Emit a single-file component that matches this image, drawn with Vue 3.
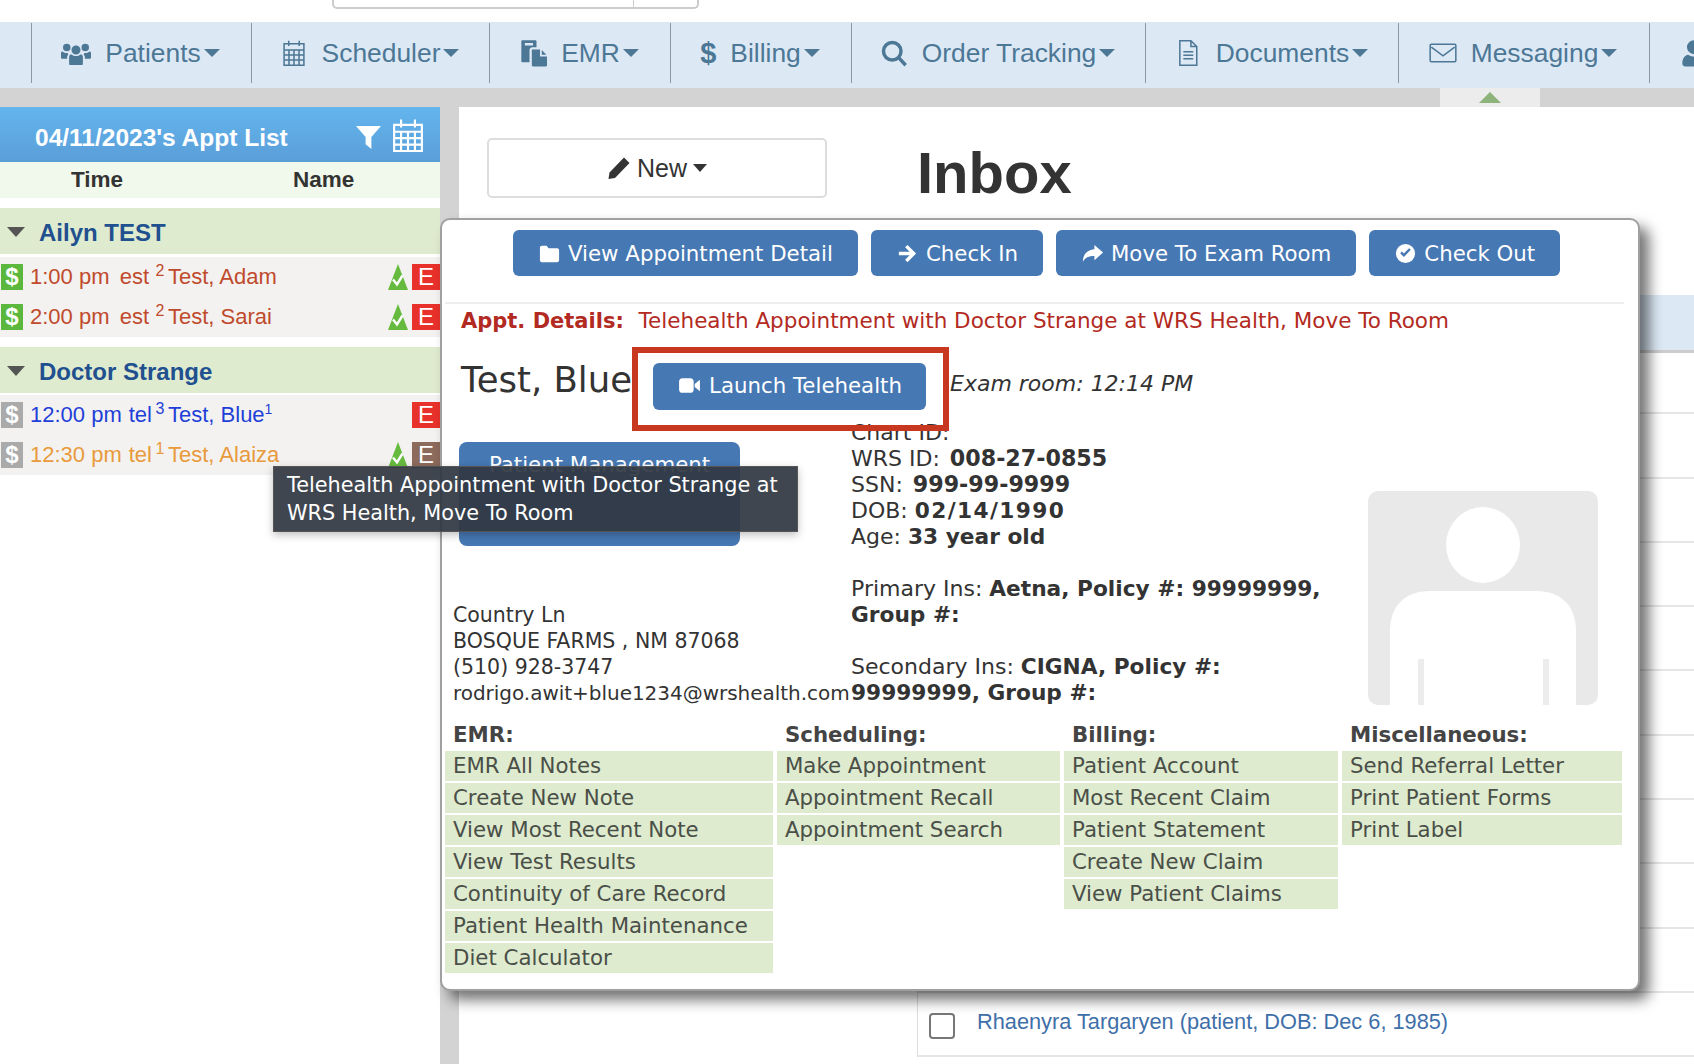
<script setup>
const navItems = [
  { label: 'Patients', icon: 'users' },
  { label: 'Scheduler', icon: 'calendar' },
  { label: 'EMR', icon: 'paste' },
  { label: 'Billing', icon: 'dollar' },
  { label: 'Order Tracking', icon: 'search' },
  { label: 'Documents', icon: 'file' },
  { label: 'Messaging', icon: 'envelope' },
];

const icons = {
  users: { fill: true, vb: '0 2.500 24 20', d: 'M12 6.500a3.600 3.600 0 1 1 0 7.200 3.600 3.600 0 0 1 0-7.200zM4.600 5a3 3 0 1 1 0 6 3 3 0 0 1 0-6zM19.400 5a3 3 0 1 1 0 6 3 3 0 0 1 0-6zM6.500 15.500c0-1.300 1-1.800 2-1.800 1 .8 2.200 1.200 3.500 1.200s2.500-.4 3.500-1.200c1 0 2 .5 2 1.800V21c0 .6-.5 1-1 1H7.500c-.5 0-1-.4-1-1zM0 12.500c0-.8.600-1.200 1.300-1.200.9.800 2 1.200 3.200 1.200.3 0 .6 0 .9-.1-.1.700.2 1.200.5 1.400-.6.400-1 1-1 1.900v1.300H1c-.6 0-1-.4-1-1zM24 12.500c0-.8-.6-1.200-1.300-1.200-.9.800-2 1.200-3.200 1.200-.3 0-.6 0-.9-.1.100.7-.2 1.200-.5 1.400.6.400 1 1 1 1.900v1.300H23c.6 0 1-.4 1-1z' },
  calendar: { d: 'M3.500 4h17v18.500h-17zM3.500 9.500h17M3.500 13.800h17M3.500 18h17M7.700 9.500v13M12 9.500v13M16.300 9.500v13M7.500 1.500v4.500M16.500 1.500v4.500' },
  paste: { fill: true, d: 'M3 1h11c.6 0 1 .4 1 1v5h-3.500c-1.400 0-2.500 1.100-2.500 2.500V20H3c-.6 0-1-.4-1-1V2c0-.6.4-1 1-1zM5 3.500v2h7v-2zM11 9h7v6h6v7.500c0 .6-.4 1-1 1H12c-.6 0-1-.4-1-1zM19.500 9.500l4 4h-4z' },
  search: { heavy: true, d: 'M10.500 3a7.500 7.500 0 1 1 0 15 7.500 7.500 0 0 1 0-15zM16 16l6 6.500' },
  file: { d: 'M5 1.500h9.500l5 5V22.500H5zM14.500 1.500v5h5M8 11h8.500M8 14h8.500M8 17h8.500' },
  envelope: { d: 'M2 4.500h20c.5 0 1 .4 1 1v13c0 .6-.5 1-1 1H2c-.5 0-1-.4-1-1v-13c0-.6.5-1 1-1zM2 7l10 7.500L22 7' },
};

const providers = [
  {
    name: 'Ailyn TEST',
    appts: [
      { time: '1:00 pm', type: 'est', sup: '2', name: 'Test, Adam', tone: 'red', paid: true, tree: true },
      { time: '2:00 pm', type: 'est', sup: '2', name: 'Test, Sarai', tone: 'red', paid: true, tree: true },
    ],
  },
  {
    name: 'Doctor Strange',
    appts: [
      { time: '12:00 pm', type: 'tel', sup: '3', name: 'Test, Blue', nameSup: '1', tone: 'blue' },
      { time: '12:30 pm', type: 'tel', sup: '1', name: 'Test, Alaiza', tone: 'orange', tree: true, brown: true },
    ],
  },
];

const menus = [
  { title: 'EMR:', items: ['EMR All Notes', 'Create New Note', 'View Most Recent Note', 'View Test Results', 'Continuity of Care Record', 'Patient Health Maintenance', 'Diet Calculator'] },
  { title: 'Scheduling:', items: ['Make Appointment', 'Appointment Recall', 'Appointment Search'] },
  { title: 'Billing:', items: ['Patient Account', 'Most Recent Claim', 'Patient Statement', 'Create New Claim', 'View Patient Claims'] },
  { title: 'Miscellaneous:', items: ['Send Referral Letter', 'Print Patient Forms', 'Print Label'] },
];

const emptyRows = 10;
</script>

<template>
  <div class="page">
    <div class="topbar">
      <div class="search-stub"><span class="search-addon"></span></div>
    </div>

    <nav class="nav">
      <span></span>
      <a v-for="item in navItems" :key="item.label" class="nav-item">
        <span v-if="item.icon === 'dollar'" class="nav-dollar">$</span>
        <svg
          v-else
          :viewBox="icons[item.icon].vb || '0 0 24 24'"
          class="nav-icon"
          :class="[item.icon, { filled: icons[item.icon].fill, heavy: icons[item.icon].heavy }]"
        >
          <path :d="icons[item.icon].d" />
        </svg>
        <span class="nav-label">{{ item.label }}</span>
        <i class="caret"></i>
      </a>
      <a class="nav-item nav-user">
        <svg viewBox="0 0 24 24" class="nav-icon filled"><path d="M12 1a6 6 0 1 1 0 12 6 6 0 0 1 0-12zM2 21c0-4 2-7 5-7.500 1.400 1 3 1.500 5 1.500s3.600-.5 5-1.500c3 .5 5 3.500 5 7.500 0 1.500-1 2.500-2.500 2.500h-15C3 23.500 2 22.500 2 21z" /></svg>
      </a>
    </nav>

    <div class="strip">
      <div class="strip-tab"><i class="strip-arrow"></i></div>
    </div>

    <div class="body">
      <aside class="sidebar">
        <div class="side-head">
          <span class="side-title">04/11/2023's Appt List</span>
          <svg viewBox="0 0 26 26" class="side-filter"><path d="M0 1h26L16 12.500V25l-6-5v-7.500z" /></svg>
          <svg viewBox="0 0 30 32" class="side-cal"><path d="M2 6h26v24.500H2zM2 12.500h26M2 18.500h26M2 24.500h26M8.500 12.500v18M15 12.500v18M21.500 12.500v18M8.500 1v7.500M21.500 1v7.500" /></svg>
        </div>
        <div class="side-cols"><span class="col-time">Time</span><span class="col-name">Name</span></div>

        <section v-for="p in providers" :key="p.name" class="provider">
          <h3 class="provider-name"><i class="provider-caret"></i><span class="provider-label">{{ p.name }}</span></h3>
          <div class="appts">
            <div v-for="a in p.appts" :key="a.time" class="appt" :class="a.tone">
              <span class="pay" :class="{ paid: a.paid }">$</span>
              <span class="appt-time">{{ a.time }}</span>
              <span class="appt-type">{{ a.type }}</span>
              <sup class="appt-sup">{{ a.sup }}</sup>
              <span class="appt-name">{{ a.name }}<sup v-if="a.nameSup" class="name-sup">{{ a.nameSup }}</sup></span>
              <svg v-if="a.tree" viewBox="0 0 20 26" class="tree">
                <path d="M10 0l10 26H0z" fill="#66bb3f" />
                <path d="M5 15.500l4 5 5.500-9" fill="none" stroke="#fff" stroke-width="2.400" />
              </svg>
              <span class="ebadge" :class="{ brown: a.brown }">E</span>
            </div>
          </div>
        </section>
      </aside>

      <main class="main">
        <div class="main-head">
          <button class="new-btn">
            <svg viewBox="0 0 24 24" class="new-icon"><path d="M17 1.500l5.500 5.500L8 22 1.500 23l1-6.500z" /></svg>
            New <i class="caret dark"></i>
          </button>
          <h1 class="inbox">Inbox</h1>
        </div>
        <div class="msg-table">
          <div class="msg-head"></div>
          <div v-for="n in emptyRows" :key="n" class="msg-row"></div>
          <div class="msg-row">
            <span class="msg-check"></span>
            <a class="msg-link">Rhaenyra Targaryen (patient, DOB: Dec 6, 1985)</a>
          </div>
        </div>
      </main>
    </div>

    <div class="popup">
      <div class="actions">
        <button class="btn">
          <svg viewBox="0 0 24 24" class="btn-icon"><path d="M2 6c0-1.100.9-2 2-2h5l2 2.500h9c1.100 0 2 .9 2 2V19c0 1.100-.9 2-2 2H4c-1.100 0-2-.9-2-2z" /></svg>
          View Appointment Detail
        </button>
        <button class="btn">
          <svg viewBox="0 0 24 24" class="btn-icon"><path d="M12 3l9 9-9 9-2.500-2.500 4.700-4.700H3v-3.600h11.200L9.500 5.500z" /></svg>
          Check In
        </button>
        <button class="btn">
          <svg viewBox="0 0 24 24" class="btn-icon"><path d="M14 3l9 8-9 8v-4.500c-6 0-9.500 1.500-12 6 0-7 3.500-12 12-13z" /></svg>
          Move To Exam Room
        </button>
        <button class="btn">
          <svg viewBox="0 0 24 24" class="btn-icon"><path fill-rule="evenodd" d="M12 2a10 10 0 1 1 0 20 10 10 0 0 1 0-20zM17.500 8.200L15.700 6.500 10.300 12 8.300 10l-1.800 1.800 3.800 3.900z" /></svg>
          Check Out
        </button>
      </div>
      <hr class="rule" />
      <p class="appt-details"><b>Appt. Details:</b> <span>Telehealth Appointment with Doctor Strange at WRS Health, Move To Room</span></p>

      <div class="name-row">
        <h2 class="patient">Test, Blue</h2>
        <div class="launch-wrap">
          <button class="btn launch">
            <svg viewBox="0 0 24 24" class="btn-icon cam"><path d="M2 8c0-1.700 1.300-3 3-3h8c1.700 0 3 1.300 3 3v8c0 1.700-1.300 3-3 3H5c-1.700 0-3-1.300-3-3zM17 10.500l5-4v11l-5-4z" /></svg>
            Launch Telehealth
          </button>
          <span class="highlight"></span>
        </div>
        <em class="exam">Exam room: 12:14 PM</em>
      </div>

      <div class="info">
        <div class="info-left">
          <button class="btn manage"><span>Patient Management</span></button>
          <div class="address">
            <div>Country Ln</div>
            <div>BOSQUE FARMS , NM 87068</div>
            <div>(510) 928-3747</div>
            <div class="email">rodrigo.awit+blue1234@wrshealth.com</div>
          </div>
        </div>
        <div class="info-mid">
          <div class="line">Chart ID:</div>
          <div class="line">WRS ID: <b class="num">008-27-0855</b></div>
          <div class="line">SSN: <b class="num">999-99-9999</b></div>
          <div class="line">DOB: <b class="date">02/14/1990</b></div>
          <div class="line">Age: <b>33 year old</b></div>
          <div class="line gap">Primary Ins: <b>Aetna, Policy #: 99999999,</b></div>
          <div class="line"><b>Group #:</b></div>
          <div class="line gap">Secondary Ins: <b>CIGNA, Policy #:</b></div>
          <div class="line"><b>99999999, Group #:</b></div>
        </div>
        <svg viewBox="0 0 230 214" class="photo">
          <ellipse cx="115" cy="54" rx="37" ry="38" fill="#fff" />
          <path d="M22 214V140c0-25 15-40 40-40h106c25 0 40 15 40 40v74z" fill="#fff" />
          <path d="M53 168v46M178 168v46" stroke="#ececec" stroke-width="6" />
        </svg>
      </div>

      <div class="menus">
        <div v-for="m in menus" :key="m.title" class="menu">
          <div class="menu-title">{{ m.title }}</div>
          <a v-for="it in m.items" :key="it" class="menu-item">{{ it }}</a>
        </div>
      </div>
    </div>

    <div class="tooltip">Telehealth Appointment with Doctor Strange at WRS Health, Move To Room</div>
  </div>
</template>

<style>
html, body {
  margin: 0;
  background: #fff;
  overflow: hidden;
}
</style>

<style scoped>
.page {
  position: relative;
  width: 1694px;
  height: 1064px;
  overflow: hidden;
  font-family: "Liberation Sans", Arial, sans-serif;
  color: #333;
}

.topbar {
  height: 22px;
}

.search-stub {
  margin-left: 332px;
  width: 367px;
  height: 9px;
  box-sizing: border-box;
  border: 2px solid #ccc;
  border-top: none;
  border-radius: 0 0 5px 5px;
  display: flex;
  justify-content: flex-end;
}

.search-addon {
  width: 63px;
  border-left: 1px solid #ccc;
}

.nav {
  height: 66px;
  background: #dce9f5;
  display: grid;
  grid-template-columns: 31px 220px 238px 181px 181px 294px 253px 251px 1fr;
  padding-top: 1px;
  box-sizing: border-box;
}

.nav-item {
  height: 60px;
  box-sizing: border-box;
  padding-right: 2px;
  border-left: 1px solid #8c979f;
  display: flex;
  align-items: center;
  justify-content: center;
  color: #4c7795;
  font-size: 26.400px;
}

.nav-icon {
  width: 28px;
  height: 28px;
  margin-right: 14px;
  fill: none;
  stroke: #4c7795;
  stroke-width: 1.300;
  flex: none;
}

.nav-icon.filled {
  fill: #4c7795;
  stroke: none;
}

.nav-icon.heavy {
  stroke-width: 3;
}

.nav-icon.users {
  width: 30px;
  height: 26px;
  margin-right: 14px;
}

.nav-dollar {
  font-size: 29px;
  font-weight: bold;
  margin-right: 14px;
}

.caret {
  display: inline-block;
  margin-left: 3px;
  border: 8px solid transparent;
  border-top: 8px solid #4c7795;
  border-bottom: none;
}

.caret.dark {
  border-top-color: #333;
  border-width: 8px 7px 0;
  margin-left: 0;
}

.nav-user {
  justify-content: flex-start;
  padding-left: 30px;
}

.strip {
  height: 19px;
  background: #d3d3d3;
}

.strip-tab {
  margin-left: 1440px;
  width: 100px;
  height: 19px;
  background: #ececec;
  display: flex;
  align-items: center;
  justify-content: center;
}

.strip-arrow {
  border: 11px solid transparent;
  border-bottom: 11px solid #8db27a;
  border-top: none;
}

.body {
  display: flex;
  height: 957px;
}

.sidebar {
  width: 440px;
  border-right: 19px solid #d3d3d3;
  flex: none;
}

.side-head {
  height: 55px;
  background: linear-gradient(#64b5ee, #5a9ed8);
  display: flex;
  align-items: center;
  padding-left: 35px;
  color: #fff;
}

.side-title {
  font-size: 24.500px;
  font-weight: bold;
  flex: 1;
  margin-top: 6px;
}

.side-filter {
  width: 25px;
  height: 25px;
  fill: #fff;
  margin: 6px 11px 0 0;
}

.side-cal {
  width: 32px;
  height: 35px;
  margin: 2px 16px 0 0;
  fill: none;
  stroke: #fff;
  stroke-width: 2;
}

.side-cols {
  height: 36px;
  background: #f1f9ec;
  display: flex;
  align-items: center;
  font-size: 22.500px;
  font-weight: bold;
}

.col-time {
  margin-left: 71px;
  width: 222px;
}

.provider {
  margin-top: 10px;
}

.provider-name {
  margin: 0;
  height: 46px;
  background: #dfebcf;
  color: #21508f;
  font-size: 24px;
  font-weight: bold;
  display: flex;
  align-items: center;
}

.provider-label {
  margin-top: 4px;
}

.provider-caret {
  border: 9px solid transparent;
  border-top: 10px solid #555;
  border-bottom: none;
  margin: 2px 14px 0 7px;
}

.appts {
  margin-top: 3px;
  background: #f3f2f0;
}

.provider + .provider .appts {
  margin-top: 2px;
}

.appt {
  height: 40px;
  display: flex;
  align-items: center;
  font-size: 22px;
  white-space: nowrap;
}

.appt.red { color: #c04a2c; }
.appt.blue { color: #1f3fd8; }
.appt.orange { color: #e89a3c; }

.pay {
  width: 22px;
  height: 26px;
  margin-left: 1px;
  background: #aaa;
  color: #fff;
  font-size: 24px;
  font-weight: bold;
  line-height: 26px;
  text-align: center;
}

.pay.paid {
  background: #5cb83c;
}

.appt-time {
  margin-left: 7px;
  width: 89px;
}

.appt-type {
  width: 33px;
  box-sizing: border-box;
  text-align: right;
}

.appt.red .appt-type {
  padding-right: 3px;
}

.appt-sup {
  width: 16px;
  font-size: 16px;
  text-align: center;
  align-self: flex-start;
  margin-top: 4px;
  line-height: 20px;
}

.appt-name {
  flex: 1;
}

.name-sup {
  font-size: 14px;
  line-height: 0;
}

.tree {
  width: 20px;
  height: 26px;
  margin-right: 4px;
}

.ebadge {
  width: 28px;
  height: 26px;
  background: #e8312a;
  color: #fff;
  font-size: 24px;
  line-height: 26px;
  text-align: center;
}

.ebadge.brown {
  background: #8c6a5c;
}

.main {
  flex: 1;
  min-width: 0;
}

.main-head {
  height: 188px;
  box-sizing: border-box;
  padding: 31px 0 0 28px;
  display: flex;
  align-items: flex-start;
}

.new-btn {
  width: 340px;
  height: 60px;
  background: #fff;
  border: 2px solid #ddd;
  border-radius: 5px;
  font-family: inherit;
  font-size: 25px;
  color: #333;
  display: flex;
  align-items: center;
  justify-content: center;
  gap: 6px;
}

.new-icon {
  width: 24px;
  height: 24px;
  fill: #333;
}

.inbox {
  margin: 2px 0 0 90px;
  font-size: 58px;
  line-height: 66px;
  font-weight: bold;
  color: #333;
}

.msg-table {
  margin-left: 458px;
  border-left: 1px solid #ddd;
}

.msg-head {
  height: 55px;
  background: #dce9f5;
  border-bottom: 3px solid #ccc;
  margin-bottom: -3px;
}

.msg-row {
  height: 64.300px;
  box-sizing: border-box;
  border-bottom: 2px solid #e5e5e5;
  display: flex;
  align-items: flex-start;
  padding: 20px 0 0 11px;
}

.msg-check {
  width: 26px;
  height: 26px;
  box-sizing: border-box;
  border: 2px solid #777;
  border-radius: 4px;
  margin-right: 22px;
}

.msg-link {
  color: #3f6fa8;
  font-size: 21.750px;
  margin-top: -4px;
}

.popup {
  position: absolute;
  left: 440px;
  top: 218px;
  width: 1200px;
  box-sizing: border-box;
  background: #fff;
  border: 2px solid #a0a0a0;
  border-radius: 10px;
  box-shadow: 9px 9px 14px rgba(0, 0, 0, 0.55);
  font-family: "DejaVu Sans", Verdana, sans-serif;
  font-size: 21.300px;
  line-height: 26px;
  padding: 10px 0 16px;
}

.actions {
  display: flex;
  gap: 13px;
  padding-left: 71px;
}

.btn {
  height: 46px;
  box-sizing: border-box;
  background: #4678b3;
  color: #fff;
  border: none;
  border-radius: 6px;
  font-family: inherit;
  font-size: 21.300px;
  padding: 0 25px;
  display: flex;
  align-items: center;
  justify-content: center;
  gap: 7px;
  white-space: nowrap;
}

.btn-icon {
  width: 23px;
  height: 23px;
  fill: #fff;
  flex: none;
}

.btn-icon.cam {
  width: 25px;
  height: 25px;
}

.rule {
  border: none;
  border-top: 2px solid #eee;
  margin: 26px 14px 0 3px;
}

.appt-details {
  margin: 4px 0 0 19px;
  color: #b22a22;
  white-space: nowrap;
}

.appt-details b {
  font-size: 21px;
}

.appt-details span {
  margin-left: 8px;
  font-size: 21.500px;
}

.name-row {
  display: flex;
  align-items: center;
  margin-top: 29px;
  padding-left: 19px;
  height: 47px;
}

.patient {
  margin: 0;
  font-size: 35.500px;
  font-weight: normal;
  color: #333;
  width: 171px;
  white-space: nowrap;
  position: relative;
  top: -7px;
}

.launch-wrap {
  position: relative;
  margin-left: 21px;
}

.launch {
  width: 273px;
  height: 47px;
  padding-bottom: 2px;
}

.highlight {
  position: absolute;
  inset: -16px -23px -21px -21px;
  border: 6px solid #c8371f;
  pointer-events: none;
}

.exam {
  margin: 0 0 5px 24px;
  font-size: 22px;
  color: #333;
}

.info {
  display: flex;
  margin-top: 10px;
  margin-left: 11px;
  height: 286px;
}

.info-left {
  width: 398px;
  flex: none;
  white-space: nowrap;
  font-size: 20.500px;
}

.manage {
  width: 281px;
  height: 104px;
  margin: 22px 0 0 6px;
  align-items: flex-start;
  padding-top: 10px;
  border-radius: 8px;
}

.address {
  margin-top: 56px;
}

.email {
  font-size: 20px;
  letter-spacing: -0.03px;
}

.info-mid {
  width: 465px;
  flex: none;
  font-size: 22px;
  white-space: nowrap;
}

.line {
  height: 26px;
}

.line.gap {
  margin-top: 26px;
}

.info-mid b {
  font-size: 21.700px;
  line-height: 1;
}

.info-mid b.num {
  font-size: 22.200px;
  margin-left: 3px;
}

.info-mid b.date {
  letter-spacing: 1.400px;
}

.photo {
  width: 230px;
  height: 214px;
  margin: 71px 0 0 52px;
  background: #e9e9e9;
  border-radius: 10px;
  flex: none;
}

.menus {
  display: grid;
  grid-template-columns: 328px 283px 274px 280px;
  column-gap: 4px;
  margin: 16px 0 0 3px;
}

.menu {
  display: flex;
  flex-direction: column;
  gap: 2px;
}

.menu-title {
  padding-left: 8px;
  font-weight: bold;
  line-height: 25px;
  margin-bottom: 2px;
  color: #444;
}

.menu-item {
  height: 30px;
  line-height: 30px;
  padding-left: 8px;
  background: #deebcf;
  color: #4a4f48;
  white-space: nowrap;
}

.tooltip {
  position: absolute;
  left: 273px;
  top: 466px;
  width: 525px;
  height: 66px;
  box-sizing: border-box;
  padding: 4px 13px;
  background: rgba(50, 56, 66, 0.93);
  border: 1px solid #555;
  box-shadow: 0 3px 8px rgba(0, 0, 0, 0.25);
  color: #fff;
  font-family: "DejaVu Sans", Verdana, sans-serif;
  font-size: 20.800px;
  line-height: 28px;
}
</style>
